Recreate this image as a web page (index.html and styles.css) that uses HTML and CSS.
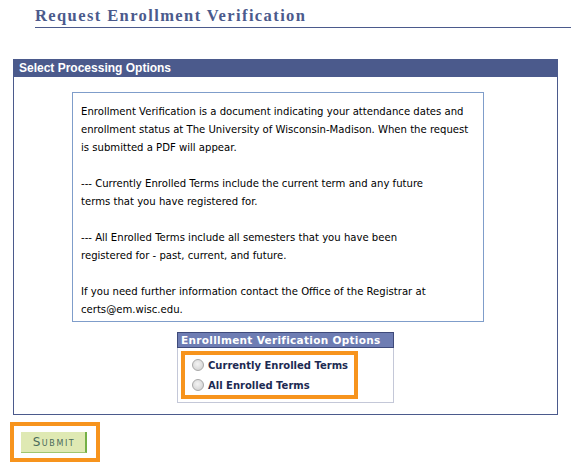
FILE: index.html
```html
<!DOCTYPE html>
<html>
<head>
<meta charset="utf-8">
<link rel="stylesheet" href="styles.css">
</head>
<body>
<div class="page">
  <h1 class="title">Request Enrollment Verification</h1>
  <div class="panel">
    <div class="panel-head">Select Processing Options</div>
    <div class="panel-body">
      <div class="info">
        <p>Enrollment Verification is a document indicating your attendance dates and<br>enrollment status at The University of Wisconsin-Madison. When the request<br>is submitted a PDF will appear.</p>
        <p>--- Currently Enrolled Terms include the current term and any future<br>terms that you have registered for.</p>
        <p>--- All Enrolled Terms include all semesters that you have been<br>registered for - past, current, and future.</p>
        <p>If you need further information contact the Office of the Registrar at<br>certs@em.wisc.edu.</p>
      </div>
      <div class="options">
        <div class="options-head">Enrolllment Verification Options</div>
        <div class="options-body">
          <div class="highlight">
            <label class="radio-row"><span class="radio"></span>Currently Enrolled Terms</label>
            <label class="radio-row"><span class="radio"></span>All Enrolled Terms</label>
          </div>
        </div>
      </div>
    </div>
  </div>
  <div class="submit-wrap">
    <button class="submit" type="button">Submit</button>
  </div>
</div>
</body>
</html>
```
FILE: styles.css
```css
html, body {
  margin: 0;
  padding: 0;
  background: #ffffff;
}
.page {
  padding: 6px 0 0 0;
  font-family: "DejaVu Sans", Verdana, sans-serif;
}
.title {
  margin: 0 0 0 35px;
  padding: 0 0 1px 0;
  font-family: "Liberation Serif", "Times New Roman", serif;
  font-size: 16.5px;
  font-weight: bold;
  letter-spacing: 1.4px;
  color: #4b5a8c;
  border-bottom: 1px solid #4b5a8c;
  line-height: 20px;
}
.panel {
  margin: 31px 0 0 13px;
  width: 543px;
  border: 1px solid #4b5a8c;
  border-top: none;
}
.panel-head {
  background: #4b5a8c;
  color: #ffffff;
  font-family: "Liberation Sans", Arial, sans-serif;
  font-weight: bold;
  font-size: 12px;
  height: 18px;
  line-height: 19px;
  padding-left: 5px;
}
.panel-body {
  padding: 15px 0 11px 58px;
}
.info {
  width: 394px;
  border: 1px solid #7f9dca;
  padding: 10px 8px 2px 8px;
  font-size: 10.1px;
  line-height: 18px;
  color: #000000;
  white-space: nowrap;
}
.info p {
  margin: 0 0 18px 0;
}
.info p:last-child {
  margin-bottom: 0;
}
.options {
  margin: 10px 0 0 105px;
  width: 215px;
  border: 1px solid #c4c8d8;
}
.options-head {
  background: #6e7db3;
  border: 1px solid #3e4a7a;
  color: #ffffff;
  font-weight: bold;
  font-size: 10.5px;
  letter-spacing: 0.3px;
  height: 14px;
  line-height: 15px;
  padding-left: 3px;
  margin: -1px -1px 0 -1px;
}
.options-body {
  padding: 3px 0 3px 3px;
}
.highlight {
  width: 162px;
  border: 4px solid #f7941d;
  padding: 0 0 0 7px;
}
.radio-row {
  display: flex;
  align-items: center;
  gap: 4px;
  height: 20px;
  font-weight: bold;
  font-size: 10px;
  color: #1c2a52;
}
.radio {
  width: 10px;
  height: 10px;
  border-radius: 50%;
  border: 1px solid #a8a8a8;
  background: radial-gradient(circle at 45% 40%, #f4f4f4 0%, #dcdcdc 60%, #c8c8c8 100%);
  flex: none;
}
.submit-wrap {
  margin: 7px 0 0 10px;
  width: 75px;
  border: 4px solid #f7941d;
  padding: 6px 0 5px 7px;
}
.submit {
  display: block;
  width: 66px;
  height: 21px;
  background: #dfe9b3;
  border: none;
  border-right: 2px solid #74b046;
  border-bottom: 1px solid #9fc66f;
  color: #4a6a5a;
  font-family: "DejaVu Sans", Verdana, sans-serif;
  font-size: 12px;
  font-variant: small-caps;
  letter-spacing: 1.6px;
  padding: 0 0 0 2px;
}
```
